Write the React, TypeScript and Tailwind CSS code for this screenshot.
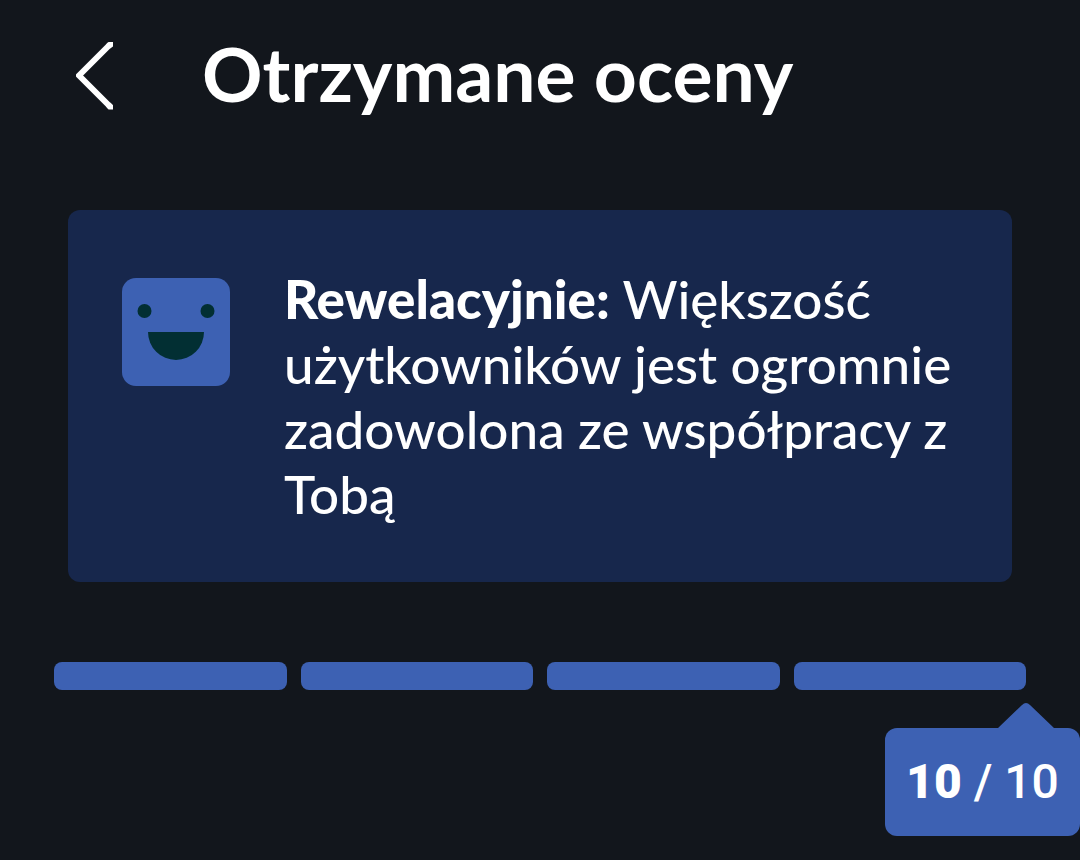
const segments = [1, 2, 3, 4];

const BackIcon = () => (
  <svg viewBox="0 0 38 70" className="h-[70px] w-[38px]" fill="none" aria-hidden="true">
    <path d="M34 4.5 3 35.500 34 66.500" stroke="white" strokeWidth="6" strokeLinejoin="round" />
    <path d="M32.500 2H37v4.500l-3 2-4-4ZM32.500 69.500H37V65l-3-2.500-4 4Z" fill="white" />
  </svg>
);

const HappyFace = () => (
  <svg viewBox="0 0 108 108" className="size-[108px] shrink-0" aria-hidden="true">
    <rect width="108" height="108" rx="14" fill="#3d61b3" />
    <circle cx="22.5" cy="33" r="7" fill="#022f33" />
    <circle cx="85.5" cy="33" r="7" fill="#022f33" />
    <path d="M26 54h56a28 28 0 0 1-56 0Z" fill="#022f33" />
  </svg>
);

export default function App() {
  return (
    <div className="min-h-screen overflow-hidden bg-[#12161c] font-['Lato','Noto_Sans',sans-serif] text-white">
      <header className="flex h-[150px] items-center gap-[88px] px-[76px]">
        <button type="button" aria-label="Wróć">
          <BackIcon />
        </button>
        <h1 className="pb-1 text-[75px] leading-[80px] font-bold">Otrzymane oceny</h1>
      </header>

      <main className="pt-[60px]">
        <section className="mx-[68px] flex gap-[54px] rounded-xl bg-[#17274c] py-14 pr-10 pl-[54px]">
          <div className="pt-3">
            <HappyFace />
          </div>
          <p className="text-[53px] leading-[65px] font-medium">
            <strong className="font-black">Rewelacyjnie:</strong> Większość użytkowników jest ogromnie zadowolona ze współpracy z Tobą
          </p>
        </section>

        <div className="mx-[54px] mt-20 grid grid-cols-4 gap-[14px]">
          {segments.map((segment) => (
            <div key={segment} className="h-7 rounded-lg bg-[#3d61b3]" />
          ))}
        </div>

        <div className="mt-3 flex flex-col items-end">
          <svg viewBox="0 0 56 26" className="mr-[26px] h-[26px] w-14" aria-hidden="true">
            <path d="M0 26 24 3q4-4 8 0l24 23Z" fill="#3d61b3" />
          </svg>
          <div className="flex h-[108px] w-[195px] items-center justify-center rounded-xl bg-[#3d61b3] font-['Roboto',sans-serif] text-[48px] font-medium">
            <p>
              <strong className="font-black">10</strong> / 10
            </p>
          </div>
        </div>
      </main>
    </div>
  );
}
